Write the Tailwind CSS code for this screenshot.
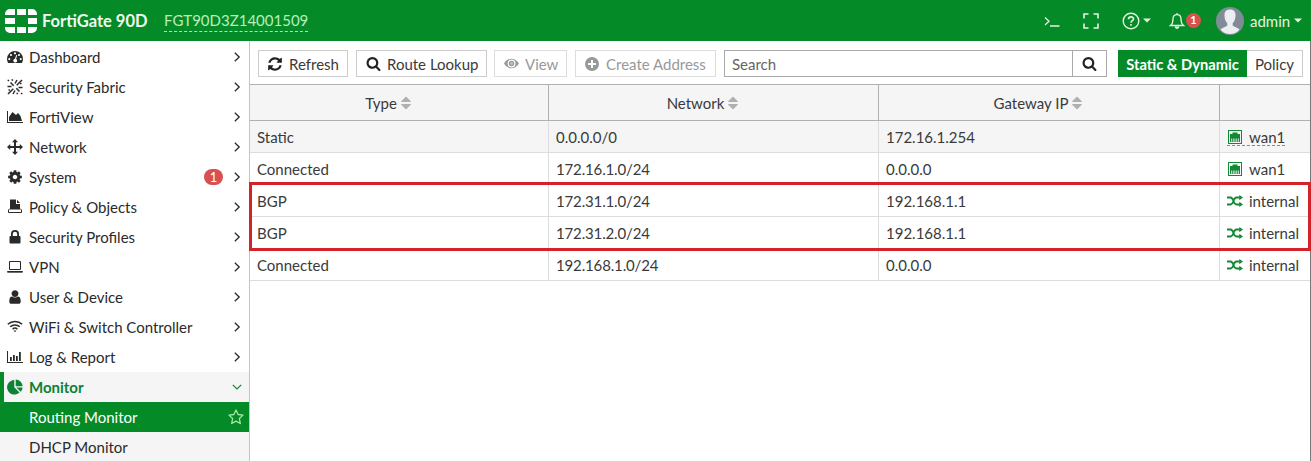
<!DOCTYPE html>
<html lang="en">
<head>
<meta charset="utf-8">
<title>FortiGate 90D - Routing Monitor</title>
<script src="https://cdn.jsdelivr.net/npm/@tailwindcss/browser@4"></script>
</head>
<body class="w-[1311px] h-[461px] overflow-hidden bg-white font-['Lato',sans-serif] text-[15px] leading-[20px] text-[#3a3a3a]">
<svg class="hidden">
  <symbol id="refresh" viewBox="0 0 1792 1792"><path d="M1639 1056q0 5-1 7-64 268-268 434.500t-478 166.500q-146 0-282.500-55t-243.500-157l-129 129q-19 19-45 19t-45-19-19-45v-448q0-26 19-45t45-19h448q26 0 45 19t19 45-19 45l-137 137q71 66 161 102t187 36q134 0 250-65t186-179q11-17 53-117 8-23 30-23h192q13 0 22.500 9.500t9.500 22.500zm25-800v448q0 26-19 45t-45 19h-448q-26 0-45-19t-19-45 19-45l138-138q-148-137-349-137-134 0-250 65t-186 179q-11 17-53 117-8 23-30 23h-199q-13 0-22.500-9.500t-9.500-22.500v-7q65-268 270-434.500t480-166.500q146 0 284 55.500t245 156.500l130-129q19-19 45-19t45 19 19 45z"/></symbol>
  <symbol id="search" viewBox="0 0 1792 1792"><path d="M1216 832q0-185-131.500-316.500t-316.500-131.500-316.500 131.500-131.500 316.500 131.500 316.500 316.500 131.500 316.500-131.500 131.500-316.500zm512 832q0 52-38 90t-90 38q-54 0-90-38l-343-342q-179 124-399 124-143 0-273.500-55.500t-225-150-150-225-55.500-273.500 55.500-273.500 150-225 225-150 273.500-55.500 273.500 55.500 225 150 150 225 55.500 273.500q0 220-124 399l343 343q37 37 37 90z"/></symbol>
  <symbol id="sort" viewBox="0 0 10 14"><path d="M5 .5 9.800 5.300v.7H.2v-.7zM.2 8h9.600v.7L5 13.500.2 8.700z"/></symbol>
  <symbol id="chev" viewBox="0 0 8 10"><path d="M1.800.8 6.200 5 1.800 9.200" fill="none" stroke="currentColor" stroke-width="1.300"/></symbol>
  <symbol id="port" viewBox="0 0 14 14"><path fill-rule="evenodd" d="M0 0h14v14H0zM1 1v12h12V1z"/><path d="M2 8.500V4h2.500V2.500h5V4H12v4.500zM2 8h1.300v4H2zM4.200 8h1.200v4H4.200zM6.400 8h1.200v4H6.400zM8.600 8h1.200v4H8.600zM10.700 8H12v4h-1.300z"/></symbol>
  <symbol id="shuffle" viewBox="0 0 16 12"><path d="M0 2.500h3.500C7 2.500 6 9.500 9.500 9.500H13M0 9.500h3.500C7 9.500 6 2.500 9.500 2.500H13" fill="none" stroke="currentColor" stroke-width="1.800"/><path d="M12.300 0 16 2.500 12.300 5.300zM12.300 6.700 16 9.500 12.300 12z"/></symbol>
</svg>
<header class="flex h-[41px] items-center bg-[#048b28] text-[#e4f5e0]">
  <svg class="ml-[5px] h-6 w-8" viewBox="0 0 32 24" fill="#fff"><path d="M5 0h5v6H0V5a5 5 0 0 1 5-5zM12 0h9v6h-9zM23 0h4a5 5 0 0 1 5 5v1h-9zM0 9h10v6H0zM23 9h9v6h-9zM0 18h10v6H5a5 5 0 0 1-5-5zM12 18h9v6h-9zM23 18h9v1a5 5 0 0 1-5 5h-4z"/></svg>
  <span class="ml-[5px] w-[107px] whitespace-nowrap text-[16.500px] font-bold text-[#f1faef]">FortiGate 90D</span>
  <span class="ml-[15px] mt-[2px] h-[20px] w-[144px] whitespace-nowrap border-b border-dashed border-[#b5e0b8] leading-[16px] text-[#b9efb9]">FGT90D3Z14001509</span>
  <div class="ml-auto flex items-center">
    <svg class="h-[16px] w-[16px]" viewBox="0 0 16 16" fill="none" stroke="currentColor" stroke-width="1.300"><path d="M1 4.500l4 3.700L1 12M6 13H15.500"/></svg>
    <svg class="ml-[23px] h-[16px] w-[16px]" viewBox="0 0 16 16" fill="none" stroke="currentColor" stroke-width="1.600"><path d="M1 5.500V1h4.500M10.500 1H15v4.500M15 10.500V15h-4.500M5.500 15H1v-4.500"/></svg>
    <svg class="ml-[23px] h-[18px] w-[18px]" viewBox="0 0 18 18" fill="none" stroke="currentColor" stroke-width="1.400"><circle cx="9" cy="9" r="7.800"/><path d="M6.500 7.200C6.500 4 11.600 4.200 11.500 7c0 1.700-2.500 1.800-2.500 3.700M9 12v1.700" stroke-width="1.600"/></svg>
    <svg class="ml-[3px] h-[5px] w-2" viewBox="0 0 8 5" fill="currentColor"><path d="M0 .5h8l-4 4z"/></svg>
    <svg class="ml-[18px] h-[18px] w-4" viewBox="0 0 16 18" fill="none" stroke="currentColor" stroke-width="1.300"><path d="M8 1v1.500M1.500 13.500c2-1.500 2.500-4 2.500-6.500 0-2.700 1.700-4.300 4-4.300s4 1.600 4 4.300c0 2.500.5 5 2.500 6.500z"/><path d="M6.200 14.500C6.500 17 9.500 17 9.800 14.500" fill="currentColor"/></svg>
    <span class="ml-[1px] mt-[-1px] flex size-[15px] items-center justify-center rounded-full bg-[#d8504f] text-[11px] font-bold text-white">1</span>
    <svg class="ml-[15px] size-7" viewBox="0 0 28 28"><circle cx="14" cy="14" r="14" fill="#828b98"/><path d="M14 2.500c-4 0-5.800 2.500-5.500 6 .1 3.500 1 6 2.800 7.800v2.200C10 20 6.500 20.500 4.500 22.500 9 28.500 19 28.500 23.500 22.500c-2-2-5.500-2.500-6.800-4v-2.200c1.800-1.800 2.700-4.300 2.800-7.800.3-3.500-1.500-6-5.500-6z" fill="#eceef2"/></svg>
    <span class="ml-[6px] w-[41px] whitespace-nowrap">admin</span>
    <svg class="ml-[3px] mr-[9px] h-[5px] w-2" viewBox="0 0 8 5" fill="currentColor"><path d="M0 .5h8l-4 4z"/></svg>
  </div>
</header>
<div class="flex h-[420px]">
  <nav class="w-[250px] shrink-0 border-r border-[#c4c4c4] pt-[1px] text-[#2a2a2a]">
    <div class="flex h-[30px] items-center pl-[7px] pr-[8px]"><svg class="mr-[6px] size-4" viewBox="0 0 16 16" fill="currentColor"><path fill-rule="evenodd" d="M8 2a8 8 0 0 0-8 8c0 1.500.4 2.800 1.100 4h13.800c.7-1.200 1.100-2.500 1.100-4a8 8 0 0 0-8-8zM8 3.200a1.100 1.100 0 1 1 0 2.200 1.100 1.100 0 0 1 0-2.200zM4 4.900a1.100 1.100 0 1 1 0 2.200 1.100 1.100 0 0 1 0-2.200zM12 4.900a1.100 1.100 0 1 1 0 2.200 1.100 1.100 0 0 1 0-2.200zM2.300 9a1.100 1.100 0 1 1 0 2.200 1.100 1.100 0 0 1 0-2.200zM13.700 9a1.100 1.100 0 1 1 0 2.200 1.100 1.100 0 0 1 0-2.200zM9.200 6l1 .3L9.100 10a1.900 1.900 0 1 1-1.100-.2z"/></svg><span>Dashboard</span><svg class="ml-auto h-[10px] w-2"><use href="#chev"/></svg></div>
    <div class="flex h-[30px] items-center pl-[7px] pr-[8px]"><svg class="mr-[6px] size-4" viewBox="0 0 16 16" fill="none" stroke="currentColor" stroke-width="1.500"><path d="M3.500 3.500l3.200 3.200M15 1l-5.300 5.300M6.300 9.700 1 15M9.300 9.300l3.200 3.200M8 4.500l2-3.500M8 11.500l-2 3.500M11.500 8.500h4M.5 7.500h4"/><path d="M.6 1.500h1.600M4.500.9h1.600M13 4.500h1.500M1.500 11h1.500M9.500 14.500h1.600M13.800 14.500h1.600"/></svg><span>Security Fabric</span><svg class="ml-auto h-[10px] w-2"><use href="#chev"/></svg></div>
    <div class="flex h-[30px] items-center pl-[7px] pr-[8px]"><svg class="mr-[6px] size-4" viewBox="0 0 16 16" fill="currentColor"><path d="M0 2h1v11h15v1H0zM2 12V8l3.500-5L9 6l2-2 2.500 3L15 12z"/></svg><span>FortiView</span><svg class="ml-auto h-[10px] w-2"><use href="#chev"/></svg></div>
    <div class="flex h-[30px] items-center pl-[7px] pr-[8px]"><svg class="mr-[6px] size-4" viewBox="0 0 16 16" fill="currentColor"><path d="M8 0l3 3.200H9V7h3.800V5L16 8l-3.200 3V9H9v3.800h2L8 16l-3-3.200h2V9H3.200v2L0 8l3.200-3v2H7V3.200H5z"/></svg><span>Network</span><svg class="ml-auto h-[10px] w-2"><use href="#chev"/></svg></div>
    <div class="flex h-[30px] items-center pl-[7px] pr-[8px]"><svg class="mr-[6px] size-4" viewBox="0 0 1792 1792" fill="currentColor"><path d="M1152 896q0-106-75-181t-181-75-181 75-75 181 75 181 181 75 181-75 75-181zm512-109v222q0 12-8 23t-20 13l-185 28q-19 54-39 91 35 50 107 138 10 12 10 25t-9 23q-27 37-99 108t-94 71q-12 0-26-9l-138-108q-44 23-91 38-16 136-29 186-7 28-36 28h-222q-14 0-24.500-8.500t-11.500-21.500l-28-184q-49-16-90-37l-141 107q-10 9-25 9-14 0-25-11-126-114-165-168-7-10-7-23 0-12 8-23 15-21 51-66.500t54-70.500q-27-50-41-99l-183-27q-13-2-21-12.500t-8-23.500v-222q0-12 8-23t19-13l186-28q14-46 39-92-40-57-107-138-10-12-10-24 0-10 9-23 26-36 98.500-107.500t94.500-71.500q13 0 26 10l138 107q44-23 91-38 16-136 29-186 7-28 36-28h222q14 0 24.500 8.500t11.500 21.500l28 184q49 16 90 37l142-107q9-9 24-9 13 0 25 10 129 119 165 170 7 8 7 22 0 12-8 23-15 21-51 66.500t-54 70.500q26 50 41 98l183 28q13 2 21 12.500t8 23.500z"/></svg><span>System</span><span class="ml-auto mr-[10px] flex h-4 w-[19px] items-center justify-center rounded-full bg-[#d8504f] text-[13px] text-white">1</span><svg class="h-[10px] w-2"><use href="#chev"/></svg></div>
    <div class="flex h-[30px] items-center pl-[7px] pr-[8px]"><svg class="mr-[6px] size-4" viewBox="0 0 16 16" fill="currentColor"><path d="M3 .5h6V5h4v5.500H3zM10 .8l3 3.200h-3z"/><path d="M3 9.500 1.500 11v2.500h13V11L13 9.500" fill="none" stroke="currentColor"/></svg><span>Policy &amp; Objects</span><svg class="ml-auto h-[10px] w-2"><use href="#chev"/></svg></div>
    <div class="flex h-[30px] items-center pl-[7px] pr-[8px]"><svg class="mr-[6px] size-4" viewBox="0 0 16 16" fill="currentColor"><path fill-rule="evenodd" d="M4 7V5a4 4 0 0 1 8 0v2h.5q1 0 1 1v5.500q0 1-1 1h-9q-1 0-1-1V8q0-1 1-1zM5.800 7h4.400V5a2.200 2.200 0 0 0-4.400 0z"/></svg><span>Security Profiles</span><svg class="ml-auto h-[10px] w-2"><use href="#chev"/></svg></div>
    <div class="flex h-[30px] items-center pl-[7px] pr-[8px]"><svg class="mr-[6px] size-4" viewBox="0 0 16 16" fill="none" stroke="currentColor"><path d="M2.500 2.500h11v8h-11z"/><path d="M.5 12.500h15v.7H.5z"/></svg><span>VPN</span><svg class="ml-auto h-[10px] w-2"><use href="#chev"/></svg></div>
    <div class="flex h-[30px] items-center pl-[7px] pr-[8px]"><svg class="mr-[6px] size-4" viewBox="0 0 1792 1792" fill="currentColor"><path d="M1536 1399q0 109-62.500 187t-150.500 78h-854q-88 0-150.500-78t-62.500-187q0-85 8.500-160.500t31.500-152 58.500-131 94-89 134.500-34.500q131 128 313 128t313-128q76 0 134.500 34.500t94 89 58.500 131 31.500 152 8.500 160.500zm-256-887q0 159-112.500 271.500t-271.500 112.500-271.500-112.500-112.500-271.500 112.500-271.500 271.500-112.500 271.500 112.500 112.500 271.500z"/></svg><span>User &amp; Device</span><svg class="ml-auto h-[10px] w-2"><use href="#chev"/></svg></div>
    <div class="flex h-[30px] items-center pl-[7px] pr-[8px]"><svg class="mr-[6px] size-4" viewBox="0 0 16 16" fill="none" stroke="currentColor" stroke-width="1.500"><path d="M.8 5.300c4-3.800 10.400-3.800 14.400 0M3.200 7.800c2.700-2.500 6.900-2.500 9.600 0M5.600 10.200c1.400-1.300 3.400-1.300 4.800 0"/><path d="M6.500 11.600h3L8 13.300z" fill="currentColor" stroke="none"/></svg><span>WiFi &amp; Switch Controller</span><svg class="ml-auto h-[10px] w-2"><use href="#chev"/></svg></div>
    <div class="flex h-[30px] items-center pl-[7px] pr-[8px]"><svg class="mr-[6px] size-4" viewBox="0 0 16 16" fill="currentColor"><path d="M0 2h1v11h15v1H0zM3 8h1.800v4H3zM6 6h1.800v6H6zM9 7h1.800v5H9zM12 3h1.800v9H12z"/></svg><span>Log &amp; Report</span><svg class="ml-auto h-[10px] w-2"><use href="#chev"/></svg></div>
    <div class="flex h-[30px] items-center border-l-4 border-[#048b28] bg-[#f5f5f5] pl-[3px] pr-[7px] font-bold text-[#0b8235]"><svg class="mr-[6px] size-4" viewBox="0 0 16 16" fill="currentColor"><path d="M7.300 1v7.300l5.200 5.200A7.300 7.300 0 1 1 7.300 1zM8.700.5a7 7 0 0 1 6.800 6.700H8.700zM9.300 8.500h6.200c0 1.700-.7 3.200-1.800 4.300z"/></svg><span>Monitor</span><svg class="ml-auto h-2 w-[10px]" viewBox="0 0 10 8" fill="none" stroke="currentColor" stroke-width="1.200"><path d="M.8 1.800 5 6l4.200-4.200"/></svg></div>
    <div class="flex h-[30px] items-center bg-[#048b28] pl-[29px] pr-[5px] text-white"><span>Routing Monitor</span><svg class="ml-auto h-4 w-4" viewBox="0 0 16 16" fill="none" stroke="#a6e5a6" stroke-width="1.300" stroke-linejoin="round"><path d="M8 1l2.100 4.500 4.900.6-3.600 3.400.9 5L8 12.100l-4.300 2.400.9-5L1 6.100l4.900-.6z"/></svg></div>
    <div class="flex h-[30px] items-center bg-[#f5f5f5] pl-[29px]">DHCP Monitor</div>
  </nav>
  <main class="relative min-w-0 flex-1 border-r border-[#777]">
    <div class="flex h-[43px] items-start pl-[8px] pt-[9px]">
      <button class="flex h-[27px] w-[90px] items-center border border-[#ccc] pl-[8px]"><svg class="mr-[6px] size-4" fill="#222"><use href="#refresh"/></svg>Refresh</button>
      <button class="ml-[8px] flex h-[27px] w-[131px] items-center whitespace-nowrap border border-[#ccc] pl-[9px]"><svg class="mr-[6px] size-[15px]" fill="#222"><use href="#search"/></svg>Route Lookup</button>
      <button class="ml-[7px] flex h-[27px] w-[73px] items-center border border-[#ddd] pl-[9px] text-[#999]"><svg class="mr-[6px] size-[15px]" viewBox="0 0 16 16"><path d="M0 8c4-6.800 12-6.800 16 0-4 6.800-12 6.800-16 0z" fill="currentColor"/><circle cx="8" cy="8" r="3.600" fill="none" stroke="#fff" stroke-width="1.300"/><circle cx="8" cy="8" r="1.500" fill="#fff" opacity=".4"/></svg>View</button>
      <button class="ml-[8px] flex h-[27px] w-[141px] items-center whitespace-nowrap border border-[#ddd] pl-[9px] text-[#999]"><svg class="mr-[7px] size-[14px]" viewBox="0 0 14 14"><circle cx="7" cy="7" r="7" fill="currentColor"/><path d="M7 3v8M3 7h8" stroke="#fff" stroke-width="2"/></svg>Create Address</button>
      <div class="ml-[8px] flex h-[27px] w-[349px] items-center border border-[#aaa] pl-[7px] text-[#666]">Search</div>
      <button class="flex h-[27px] w-[34px] items-center justify-center border border-l-0 border-[#aaa]"><svg class="size-[15px]" fill="#222"><use href="#search"/></svg></button>
      <button class="ml-[11px] h-[27px] w-[129px] whitespace-nowrap bg-[#048b28] text-[14.700px] font-bold text-white">Static &amp; Dynamic</button>
      <button class="h-[27px] w-[56px] border border-l-0 border-[#ccc]">Policy</button>
    </div>
    <div class="grid grid-cols-[299px_330px_341px_1fr]">
      <div class="contents *:flex *:h-[37px] *:items-center *:justify-center *:gap-[4px] *:border-y *:border-r *:border-[#b0b0b0] *:bg-[#f5f5f5] *:pr-[22px] *:last:border-r-0">
        <div>Type<svg class="h-[14px] w-[10px]" fill="#b0b0b0"><use href="#sort"/></svg></div>
        <div>Network<svg class="h-[14px] w-[10px]" fill="#b0b0b0"><use href="#sort"/></svg></div>
        <div>Gateway IP<svg class="h-[14px] w-[10px]" fill="#b0b0b0"><use href="#sort"/></svg></div>
        <div></div>
      </div>
      <div class="contents *:flex *:h-8 *:items-center *:border-b *:border-r *:border-[#ddd] *:bg-[#f5f5f5] *:pl-[7px] *:last:border-r-0">
        <div>Static</div><div>0.0.0.0/0</div><div>172.16.1.254</div><div><span class="mt-[1px] flex h-[18px] items-center border-b border-dashed border-[#888]"><svg class="ml-[1px] mr-[7px] size-[14px]" fill="#108a35"><use href="#port"/></svg>wan1</span></div>
      </div>
      <div class="contents *:flex *:h-8 *:items-center *:border-b *:border-r *:border-[#ddd] *:pl-[7px] *:last:border-r-0">
        <div>Connected</div><div class="tracking-[-0.15px]">172.16.1.0/24</div><div>0.0.0.0</div><div><svg class="ml-[1px] mr-[7px] size-[14px]" fill="#108a35"><use href="#port"/></svg>wan1</div>
      </div>
      <div class="contents *:flex *:h-8 *:items-center *:border-b *:border-r *:border-[#ddd] *:pl-[7px] *:last:border-r-0">
        <div>BGP</div><div class="tracking-[-0.15px]">172.31.1.0/24</div><div>192.168.1.1</div><div><svg class="mr-[6px] h-3 w-4 text-[#108a35]" fill="currentColor"><use href="#shuffle"/></svg>internal</div>
      </div>
      <div class="contents *:flex *:h-8 *:items-center *:border-b *:border-r *:border-[#ddd] *:pl-[7px] *:last:border-r-0">
        <div>BGP</div><div class="tracking-[-0.15px]">172.31.2.0/24</div><div>192.168.1.1</div><div><svg class="mr-[6px] h-3 w-4 text-[#108a35]" fill="currentColor"><use href="#shuffle"/></svg>internal</div>
      </div>
      <div class="contents *:flex *:h-8 *:items-center *:border-b *:border-r *:border-[#ddd] *:pl-[7px] *:last:border-r-0">
        <div>Connected</div><div class="tracking-[-0.15px]">192.168.1.0/24</div><div>0.0.0.0</div><div><svg class="mr-[6px] h-3 w-4 text-[#108a35]" fill="currentColor"><use href="#shuffle"/></svg>internal</div>
      </div>
    </div>
    <div class="absolute -left-[1px] top-[141px] h-[69px] w-[1062px] border-3 border-[#d2232a]"></div>
  </main>
</div>
</body>
</html>
